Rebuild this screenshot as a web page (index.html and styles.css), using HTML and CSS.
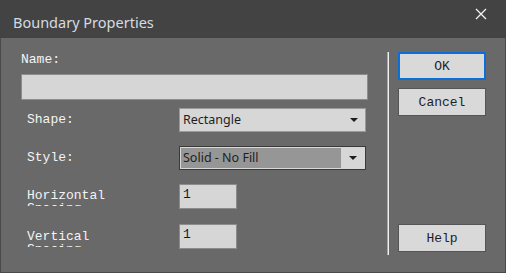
FILE: index.html
```
<!DOCTYPE html>
<html lang="en">
<head>
  <meta charset="UTF-8">
  <title>Boundary Properties</title>
  <link rel="stylesheet" href="styles.css">
</head>
<body>
  <div class="dialog">
    <div class="titlebar">
      <span class="title">Boundary Properties</span>
      <span class="close">
        <svg width="12" height="12" viewBox="0 0 12 12">
          <path d="M1 1 L11 11 M11 1 L1 11" stroke="#f2f2f2" stroke-width="1.3" fill="none"/>
        </svg>
      </span>
    </div>
    <div class="client">
      <div class="form">
        <div class="name-label">Name:</div>
        <div class="textbox name-box"></div>

        <div class="row row-shape">
          <span class="label">Shape:</span>
          <div class="select">
            <span class="select-text">Rectangle</span>
            <span class="arrow"></span>
          </div>
        </div>

        <div class="row row-style">
          <span class="label">Style:</span>
          <div class="select focused">
            <span class="select-text">Solid - No Fill</span>
            <span class="arrow"></span>
          </div>
        </div>

        <div class="row row-num row-h">
          <span class="label wrap">Horizontal Spacing</span>
          <div class="textbox num-box">1</div>
        </div>

        <div class="row row-num row-v">
          <span class="label wrap">Vertical Spacing</span>
          <div class="textbox num-box">1</div>
        </div>
      </div>

      <div class="separator"></div>

      <div class="buttons">
        <div class="btn default">OK</div>
        <div class="btn">Cancel</div>
        <div class="spacer"></div>
        <div class="btn">Help</div>
      </div>
    </div>
  </div>
</body>
</html>
```

FILE: styles.css
```
* {
  box-sizing: border-box;
  margin: 0;
  padding: 0;
}

body {
  background-color: #696969;
  width: 506px;
  height: 273px;
  overflow: hidden;
}

.dialog {
  width: 506px;
  height: 273px;
  display: flex;
  flex-direction: column;
}

.titlebar {
  height: 38px;
  background-color: #434343;
  display: flex;
  align-items: flex-start;
  justify-content: space-between;
}

.title {
  font-family: 'Noto Sans', sans-serif;
  font-size: 14.5px;
  color: #d5dbe2;
  margin-top: 13px;
  margin-left: 13px;
  line-height: 18px;
}

.close {
  margin-top: 8px;
  margin-right: 19px;
  width: 12px;
  height: 12px;
  display: flex;
}

.client {
  flex: 1;
  display: flex;
  background-color: #696969;
  border-left: 1px solid #4a4a4a;
  border-right: 1px solid #4a4a4a;
  border-bottom: 1px solid #4a4a4a;
  font-family: 'Liberation Mono', monospace;
  font-size: 13px;
  color: #f4f4f4;
}

.form {
  width: 367px;
  padding-left: 20px;
  padding-top: 15px;
  display: flex;
  flex-direction: column;
}

.name-label {
  line-height: 14px;
  height: 14px;
}

.textbox {
  background-color: #d6d6d6;
  border: 1px solid #8c8c8c;
  color: #1a1a1a;
}

.name-box {
  margin-top: 7px;
  width: 347px;
  height: 26px;
}

.row {
  display: flex;
  align-items: center;
  height: 24px;
}

.row-shape {
  margin-top: 8px;
}

.row-style {
  margin-top: 14px;
}

.label {
  width: 152px;
  margin-left: 6px;
  line-height: 14px;
}

.select {
  width: 187px;
  height: 24px;
  background-color: #d7d7d7;
  border: 1px solid #9a9a9a;
  display: flex;
  align-items: center;
  font-family: 'Noto Sans', sans-serif;
  font-size: 12.5px;
  color: #1e1e1e;
}

.select-text {
  flex: 1;
  padding-left: 3px;
  line-height: 18px;
}

.select.focused {
  border: 1px solid #3a3a3a;
  padding: 1px;
}

.select.focused .select-text {
  background-color: #969696;
  height: 100%;
  line-height: 20px;
  padding-left: 2px;
}

.arrow {
  width: 23px;
  display: flex;
  justify-content: center;
}

.arrow::after {
  content: '';
  border-left: 4px solid transparent;
  border-right: 4px solid transparent;
  border-top: 4px solid #1e1e1e;
}

.row-num {
  align-items: flex-start;
  height: 25px;
}

.row-h {
  margin-top: 14px;
}

.row-v {
  margin-top: 15px;
}

.label.wrap {
  width: 88px;
  margin-right: 64px;
  height: 17px;
  overflow: hidden;
  line-height: 13px;
  margin-top: 5px;
}

.row-v .label.wrap {
  margin-top: 6px;
}

.num-box {
  width: 58px;
  height: 25px;
  padding-left: 3px;
  line-height: 20px;
}

.separator {
  margin-left: 19px;
  margin-top: 14px;
  width: 2px;
  height: 203px;
  border-left: 1px solid #a8a8a8;
  border-right: 1px solid #f0f0f0;
}

.buttons {
  margin-left: 9px;
  margin-top: 14px;
  width: 88px;
  display: flex;
  flex-direction: column;
}

.btn {
  height: 28px;
  background-color: #d9d9d9;
  border: 1px solid #555555;
  color: #1e1e1e;
  display: flex;
  align-items: center;
  justify-content: center;
  margin-bottom: 8px;
}

.btn.default {
  border: 1px solid #0a6fd8;
  box-shadow: inset 0 0 0 1px #0a6fd8;
}

.spacer {
  height: 100px;
}
```
